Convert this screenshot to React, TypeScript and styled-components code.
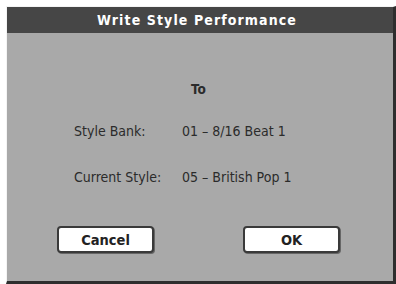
import React from "react";
import styled, { createGlobalStyle } from "styled-components";

const Global = createGlobalStyle`
  html, body { margin: 0; padding: 0; background: #ffffff; }
  body { width: 396px; height: 284px; overflow: hidden; }
`;

const Dialog = styled.div`
  margin: 6px 0 0 6px;
  width: 390px;
  height: 278px;
  box-sizing: border-box;
  border-left: 1px solid #f4f4f4;
  border-top: 1px solid #f4f4f4;
  border-right: 3px solid #2e2e2e;
  border-bottom: 3px solid #2e2e2e;
  background: #a9a9a9;
  display: flex;
  flex-direction: column;
  font-family: "DejaVu Sans Condensed", "DejaVu Sans", sans-serif;
  color: #2b2b2b;
`;

const TitleBar = styled.div`
  height: 26px;
  background: #464646;
  color: #ffffff;
  display: flex;
  align-items: center;
  justify-content: center;
  font-weight: bold;
  font-size: 14px;
  letter-spacing: 1.1px;
  padding-right: 6px;
`;

const Body = styled.div`
  display: flex;
  flex-direction: column;
  padding: 48px 0 0 67px;
`;

const Heading = styled.div`
  font-weight: bold;
  font-size: 13.5px;
  margin-left: 117px;
  height: 16px;
  line-height: 16px;
`;

const Row = styled.div<{ $top: number }>`
  display: grid;
  grid-template-columns: 108px auto;
  margin-top: ${(p) => p.$top}px;
  font-size: 14px;
  height: 16px;
  line-height: 16px;
`;

const Buttons = styled.div`
  display: flex;
  gap: 89px;
  margin: 41px 0 0 50px;
`;

const Button = styled.div`
  width: 97px;
  height: 27px;
  box-sizing: border-box;
  background: #ffffff;
  border: 2px solid #3a3a3a;
  border-radius: 4px;
  box-shadow: 1px 1px 0 #666;
  display: flex;
  align-items: center;
  justify-content: center;
  font-weight: bold;
  font-size: 14.5px;
  color: #222;
`;

export default function App() {
  return (
    <>
      <Global />
      <Dialog>
        <TitleBar>Write Style Performance</TitleBar>
        <Body>
          <Heading>To</Heading>
          <Row $top={26}>
            <span>Style Bank:</span>
            <span>01 – 8/16 Beat 1</span>
          </Row>
          <Row $top={30}>
            <span>Current Style:</span>
            <span>05 – British Pop 1</span>
          </Row>
        </Body>
        <Buttons>
          <Button>Cancel</Button>
          <Button>OK</Button>
        </Buttons>
      </Dialog>
    </>
  );
}
